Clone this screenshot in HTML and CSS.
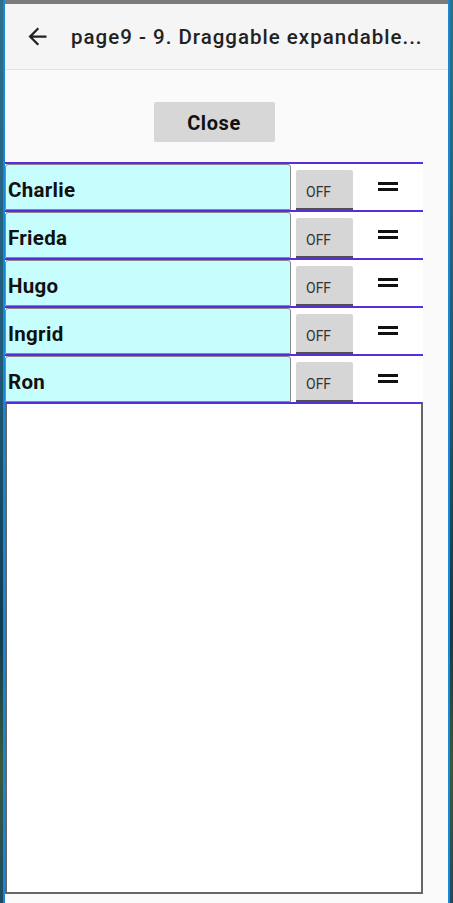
FILE: index.html
```html
<!DOCTYPE html>
<html>
<head>
<meta charset="utf-8">
<link rel="stylesheet" href="styles.css">
</head>
<body>
<div class="window">
  <div class="statusbar"></div>
  <header class="appbar">
    <svg class="back" width="27" height="27" viewBox="0 0 24 24"><path d="M20 11H7.83l5.59-5.59L12 4l-8 8 8 8 1.41-1.41L7.83 13H20v-2z" fill="#222"/></svg>
    <div class="title">page9 - 9. Draggable expandable...</div>
  </header>
  <main class="content">
    <div class="btnrow"><button class="close">Close</button></div>
    <div class="list">
      <div class="row"><div class="name">Charlie</div><div class="toggle">OFF</div><div class="handle"><span></span><span></span></div></div>
      <div class="row"><div class="name">Frieda</div><div class="toggle">OFF</div><div class="handle"><span></span><span></span></div></div>
      <div class="row"><div class="name">Hugo</div><div class="toggle">OFF</div><div class="handle"><span></span><span></span></div></div>
      <div class="row"><div class="name">Ingrid</div><div class="toggle">OFF</div><div class="handle"><span></span><span></span></div></div>
      <div class="row"><div class="name">Ron</div><div class="toggle">OFF</div><div class="handle"><span></span><span></span></div></div>
      <div class="empty"></div>
    </div>
  </main>
</div>
</body>
</html>
```
FILE: styles.css
```css
html, body { margin: 0; padding: 0; }
body {
  width: 453px;
  height: 903px;
  overflow: hidden;
  background: linear-gradient(180deg, #2d6f8c 0%, #1f5a78 40%, #0f3a50 70%, #3a5a3a 85%, #1c4a63 100%);
  font-family: Roboto, "Noto Sans", sans-serif;
}
.window {
  margin: 0 3px;
  height: 903px;
  border-left: 2px solid #1a86d6;
  border-right: 2px solid #1a86d6;
  background: #fafafa;
  display: flex;
  flex-direction: column;
}
.statusbar { height: 4px; background: #7b7b7b; }
.appbar {
  height: 66px;
  background: #f5f5f5;
  border-bottom: 1px solid #e4e4e4;
  display: flex;
  align-items: center;
  box-sizing: border-box;
}
.back { margin-left: 19px; }
.title {
  margin-left: 20px;
  font-size: 20.5px;
  font-weight: 500;
  letter-spacing: 1px;
  color: #222;
  white-space: nowrap;
}
.content { width: 418px; }
.btnrow { display: flex; justify-content: center; padding-top: 32px; }
.close {
  width: 121px;
  height: 40px;
  border: none;
  border-radius: 2px;
  background: #d7d7d7;
  font-family: Roboto, sans-serif;
  font-weight: 700;
  font-size: 20px;
  letter-spacing: 0.6px;
  color: #111;
  padding: 2px 0 0 0;
}
.list { margin-top: 20px; }
.row {
  height: 48px;
  border-top: 2px solid #5a2ddc;
  box-sizing: border-box;
  display: flex;
  background: #fff;
}
.name {
  width: 286px;
  box-sizing: border-box;
  background: #c6fdfd;
  border: 1px solid #888;
  border-radius: 3px 3px 0 0;
  display: flex;
  align-items: center;
  padding-left: 2px;
  padding-top: 5px;
  font-size: 20.5px;
  font-weight: 700;
  letter-spacing: 0.3px;
  color: #111;
}
.toggle {
  margin: 6px 0 0 5px;
  width: 57px;
  height: 40px;
  box-sizing: border-box;
  background: #d6d6d6;
  border-bottom: 2px solid #505050;
  border-radius: 2px 2px 0 0;
  font-size: 14px;
  color: #333;
  padding-left: 10px;
  padding-top: 14px;
}
.handle {
  margin-left: 25px;
  padding-top: 18px;
  display: flex;
  flex-direction: column;
  gap: 3px;
}
.handle span { display: block; width: 20px; height: 3px; background: #111; }
.empty {
  height: 492px;
  box-sizing: border-box;
  border-top: 2px solid #5a2ddc;
  border-left: 2px solid #666;
  border-right: 2px solid #666;
  border-bottom: 2px solid #666;
  background: #fff;
}
```
